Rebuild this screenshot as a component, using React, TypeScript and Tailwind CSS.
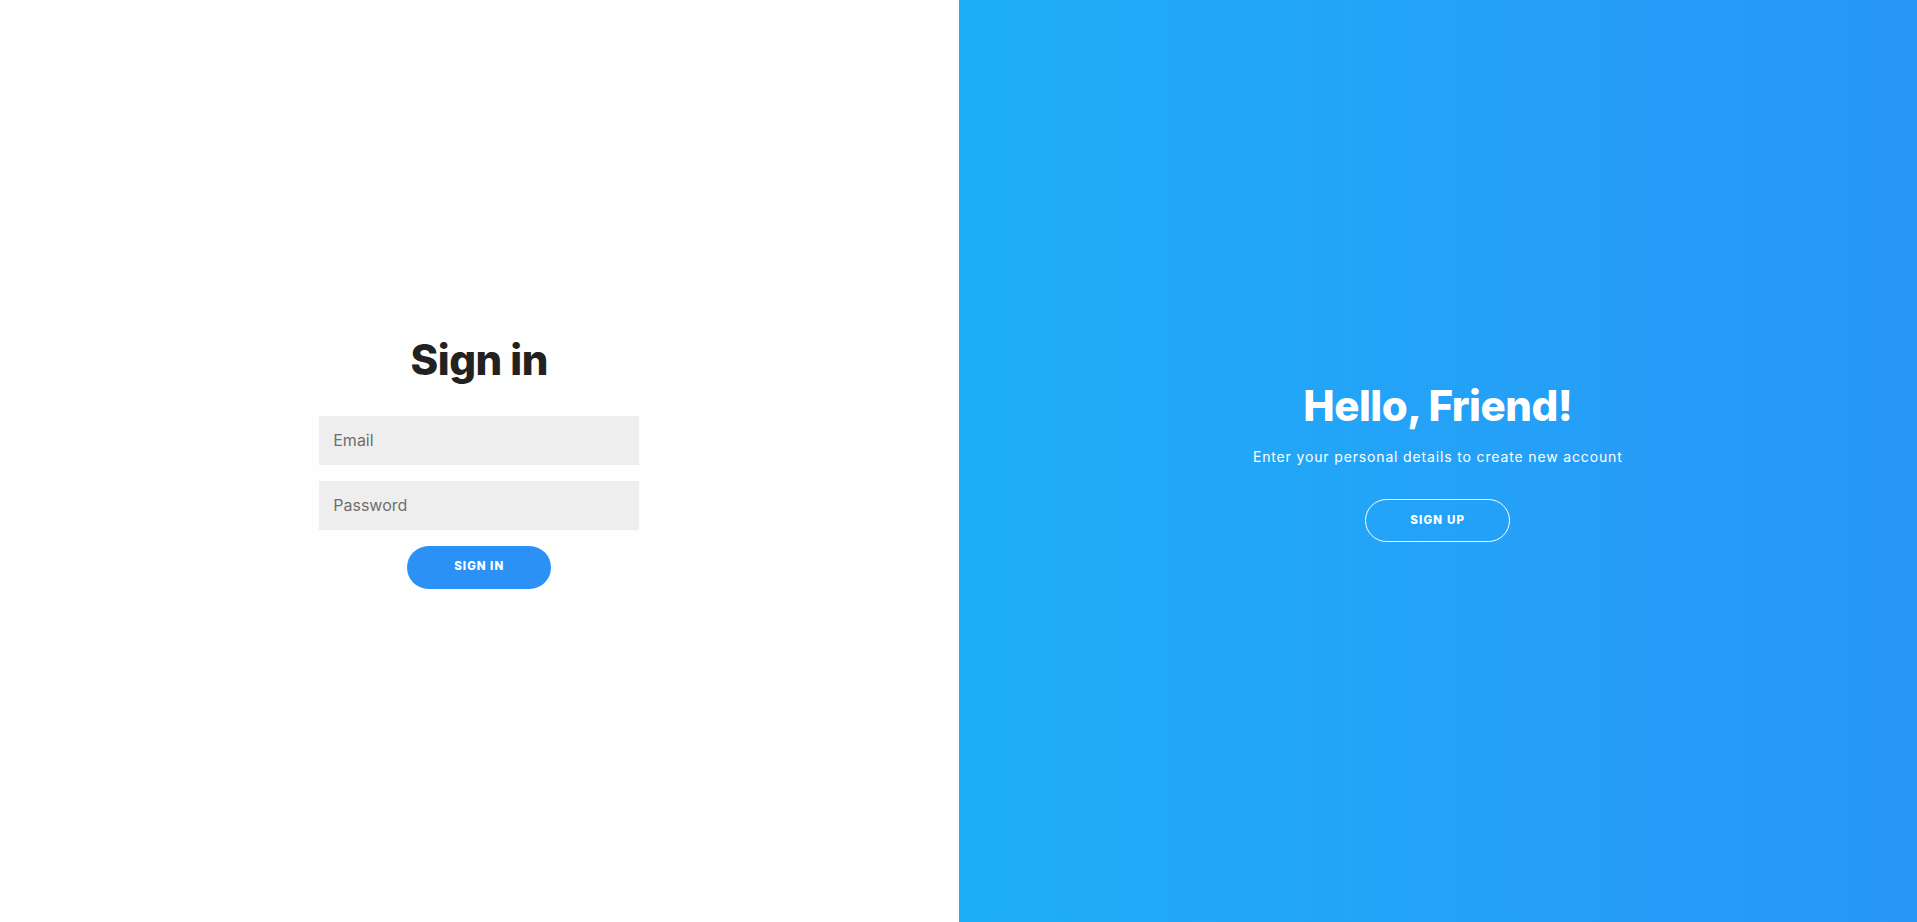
export default function App() {
  return (
    <div className="flex h-[922px] w-full font-['Inter',sans-serif]">
      <div className="flex w-1/2 flex-col items-center justify-center bg-[#fefefe]">
        <h1 className="text-[42px] font-extrabold leading-[52px] tracking-[-0.5px] text-[#222222]">
          Sign in
        </h1>
        <form className="mt-[30px] flex w-[320px] flex-col items-center">
          <input
            type="email"
            placeholder="Email"
            className="h-[49px] w-full bg-[#eeeeee] px-[14px] text-[16px] text-[#333] outline-none placeholder:text-[#6f6f6f]"
          />
          <input
            type="password"
            placeholder="Password"
            className="mt-4 h-[49px] w-full bg-[#eeeeee] px-[14px] text-[16px] text-[#333] outline-none placeholder:text-[#6f6f6f]"
          />
          <button
            type="button"
            className="mt-4 h-[43px] w-[144px] rounded-[22px] bg-[#2b91f5] text-[11.5px] font-extrabold tracking-[1px] text-white"
          >
            SIGN IN
          </button>
        </form>
      </div>
      <div className="flex w-1/2 flex-col items-center justify-center bg-gradient-to-r from-[#1eaef8] to-[#2896f7] text-white">
        <h2 className="text-[42px] font-extrabold leading-[52px] tracking-[-0.5px]">
          Hello, Friend!
        </h2>
        <p className="mt-[15px] text-[14px] leading-[20px] tracking-[0.85px]">
          Enter your personal details to create new account
        </p>
        <button
          type="button"
          className="mt-[32px] h-[43px] w-[145px] rounded-[22px] border border-white text-[11.5px] font-extrabold tracking-[1.2px] text-white"
        >
          SIGN UP
        </button>
      </div>
    </div>
  );
}
